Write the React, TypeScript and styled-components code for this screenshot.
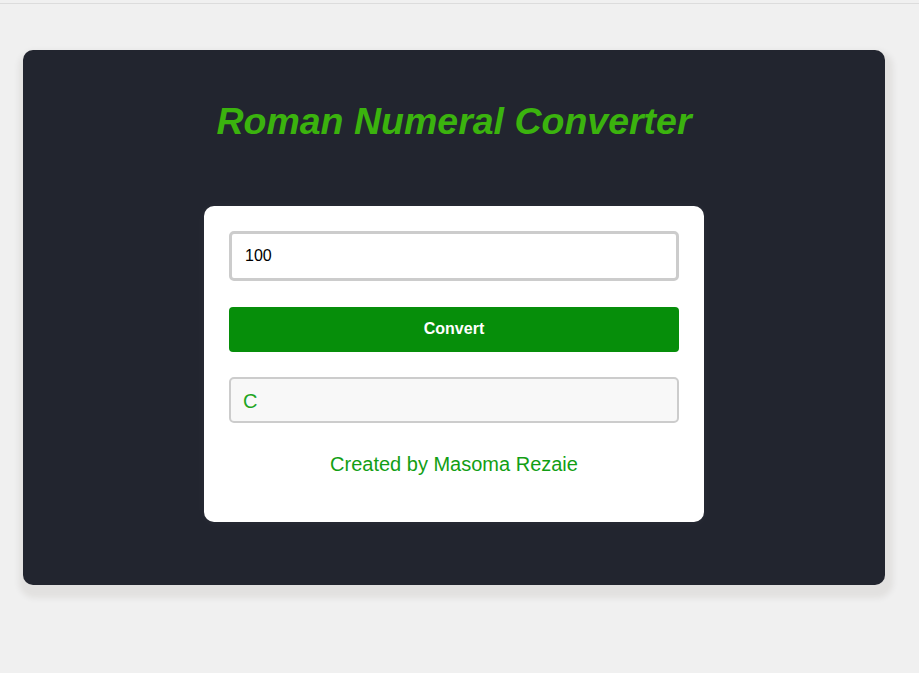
import { useState } from "react";
import styled, { createGlobalStyle } from "styled-components";

const GlobalStyle = createGlobalStyle`
  html, body {
    margin: 0;
    padding: 0;
    background-color: #f0f0f0;
    font-family: "Liberation Sans", Arial, sans-serif;
  }
  * {
    box-sizing: border-box;
  }
`;

const Page = styled.div`
  padding-top: 3px;
  min-height: 673px;
`;

const TopRule = styled.div`
  height: 1px;
  background-color: #dcdcdc;
`;

const Container = styled.main`
  margin: 46px 0 0 23px;
  width: 862px;
  height: 535px;
  background-color: #22252f;
  border-radius: 10px;
  box-shadow: 2px 7px 6px 6px rgba(40, 30, 20, 0.07);
  padding-top: 50px;
  display: flex;
  flex-direction: column;
  align-items: center;
`;

const Title = styled.h1`
  margin: 0 0 63px;
  font-size: 37.5px;
  line-height: 43px;
  font-style: italic;
  font-weight: bold;
  color: #3bb30e;
`;

const Card = styled.section`
  width: 500px;
  background-color: #ffffff;
  border-radius: 10px;
  padding: 25px 25px 46px;
  box-shadow: 0 0 12px rgba(255, 255, 255, 0.04);
  display: flex;
  flex-direction: column;
`;

const NumberInput = styled.input`
  height: 50px;
  width: 100%;
  border: 3px solid #cccccc;
  border-radius: 5px;
  padding: 0 13px;
  font-family: "Liberation Sans", Arial, sans-serif;
  font-size: 16px;
  color: #000;
  outline: none;
`;

const ConvertButton = styled.button`
  margin-top: 26px;
  height: 45px;
  width: 100%;
  border: none;
  border-radius: 4px;
  background-color: #068e0a;
  color: #ffffff;
  font-family: "Liberation Sans", Arial, sans-serif;
  font-size: 16px;
  font-weight: bold;
  padding-bottom: 2px;
  cursor: pointer;
`;

const Output = styled.div`
  margin-top: 25px;
  height: 46px;
  border: 2px solid #cccccc;
  border-radius: 5px;
  background-color: #f8f8f8;
  padding: 3px 12px 0;
  display: flex;
  align-items: center;
  font-size: 20px;
  color: #1fa51f;
`;

const Credit = styled.p`
  margin: 30px 0 0;
  text-align: center;
  font-size: 20px;
  line-height: 23px;
  color: #129e14;
`;

const toRoman = (value: number): string => {
  const table: [number, string][] = [
    [1000, "M"],
    [900, "CM"],
    [500, "D"],
    [400, "CD"],
    [100, "C"],
    [90, "XC"],
    [50, "L"],
    [40, "XL"],
    [10, "X"],
    [9, "IX"],
    [5, "V"],
    [4, "IV"],
    [1, "I"],
  ];
  let n = value;
  let out = "";
  for (const [num, sym] of table) {
    while (n >= num) {
      out += sym;
      n -= num;
    }
  }
  return out;
};

export default function App() {
  const [input, setInput] = useState("100");
  const [result, setResult] = useState("C");

  const handleConvert = () => {
    const n = parseInt(input, 10);
    if (isNaN(n) || n < 1 || n > 3999) {
      setResult("Enter a number 1-3999");
      return;
    }
    setResult(toRoman(n));
  };

  return (
    <>
      <GlobalStyle />
      <Page>
        <TopRule />
        <Container>
          <Title>Roman Numeral Converter</Title>
          <Card>
            <NumberInput
              type="text"
              value={input}
              onChange={(e) => setInput(e.target.value)}
            />
            <ConvertButton onClick={handleConvert}>Convert</ConvertButton>
            <Output>{result}</Output>
            <Credit>Created by Masoma Rezaie</Credit>
          </Card>
        </Container>
      </Page>
    </>
  );
}
